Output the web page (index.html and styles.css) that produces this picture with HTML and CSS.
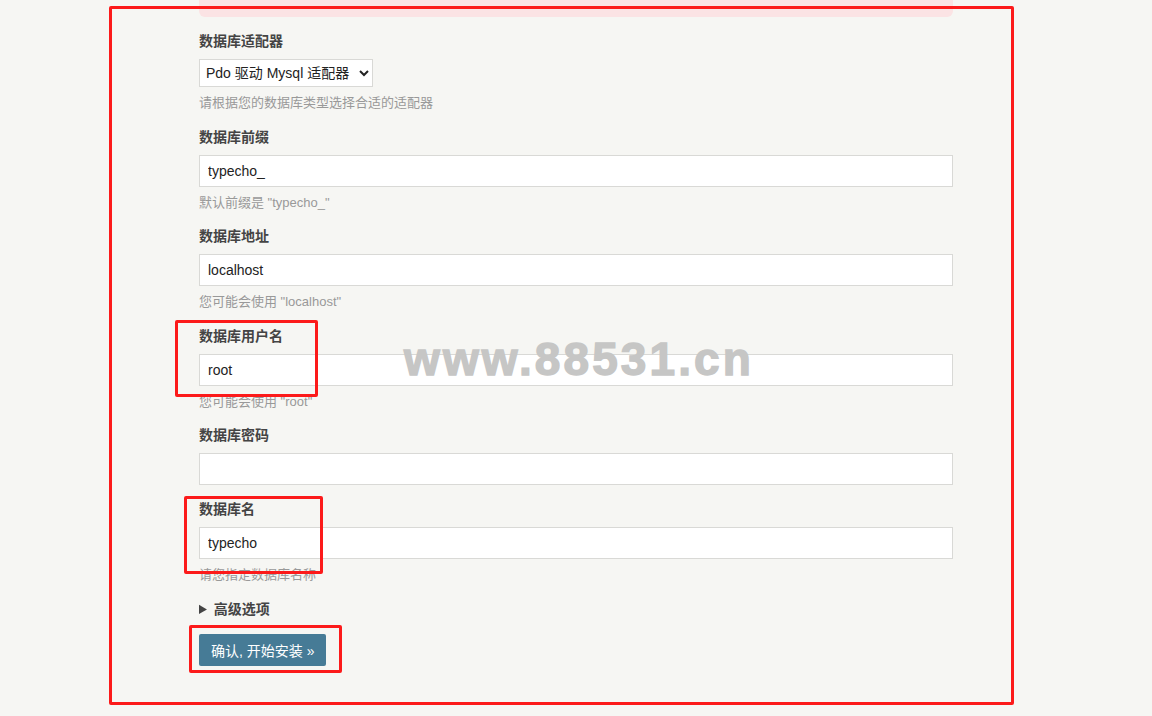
FILE: index.html
```html
<!DOCTYPE html>
<html lang="zh-CN">
<head>
<meta charset="utf-8">
<title>Typecho 安装</title>
<link rel="stylesheet" href="styles.css">
</head>
<body>
<div class="page">
  <div class="container">
    <div class="message-error"></div>
    <form class="install-form">
      <ul class="typecho-option">
        <li>
          <label class="typecho-label" for="dbAdapter">数据库适配器</label>
          <select id="dbAdapter" class="select">
            <option>Pdo 驱动 Mysql 适配器</option>
          </select>
          <p class="description">请根据您的数据库类型选择合适的适配器</p>
        </li>
      </ul>
      <ul class="typecho-option">
        <li>
          <label class="typecho-label" for="dbPrefix">数据库前缀</label>
          <input id="dbPrefix" class="text" type="text" value="typecho_">
          <p class="description">默认前缀是 "typecho_"</p>
        </li>
      </ul>
      <ul class="typecho-option">
        <li>
          <label class="typecho-label" for="dbHost">数据库地址</label>
          <input id="dbHost" class="text" type="text" value="localhost">
          <p class="description">您可能会使用 "localhost"</p>
        </li>
      </ul>
      <ul class="typecho-option">
        <li>
          <label class="typecho-label" for="dbUser">数据库用户名</label>
          <input id="dbUser" class="text" type="text" value="root">
          <p class="description">您可能会使用 "root"</p>
        </li>
      </ul>
      <ul class="typecho-option">
        <li>
          <label class="typecho-label" for="dbPassword">数据库密码</label>
          <input id="dbPassword" class="text" type="password" value="">
        </li>
      </ul>
      <ul class="typecho-option">
        <li>
          <label class="typecho-label" for="dbDatabase">数据库名</label>
          <input id="dbDatabase" class="text" type="text" value="typecho">
          <p class="description">请您指定数据库名称</p>
        </li>
      </ul>
      <details class="advanced">
        <summary>高级选项</summary>
      </details>
      <ul class="typecho-option submit-row">
        <li>
          <button type="button" class="btn primary">确认, 开始安装 »</button>
        </li>
      </ul>
    </form>
  </div>

  <div class="watermark">www.88531.cn</div>
  <div class="mark mark-page"></div>
  <div class="mark mark-user"></div>
  <div class="mark mark-dbname"></div>
  <div class="mark mark-submit"></div>
</div>
</body>
</html>
```

FILE: styles.css
```css
html, body {
  margin: 0;
  padding: 0;
  height: 100%;
  overflow: hidden;
}

body {
  background: #F6F6F3;
  color: #444;
  font-family: "Liberation Sans", Arial, "Noto Sans CJK SC", sans-serif;
  font-size: 14px;
  line-height: 1.5;
}

.page {
  position: relative;
  min-height: 716px;
}

.container {
  width: 754px;
  margin: 0 auto;
}

.message-error {
  height: 17px;
  background: #FBE3E4;
  border-radius: 0 0 6px 6px;
}

.install-form {
  margin: 0;
}

.typecho-option {
  list-style: none;
  margin: 14px 0;
  padding: 0;
}

.typecho-label {
  display: block;
  margin-bottom: 7px;
  font-weight: bold;
}

.text {
  display: block;
  box-sizing: border-box;
  width: 100%;
  height: 32px;
  margin: 0;
  padding: 0 8px;
  border: 1px solid #D9D9D6;
  border-radius: 0;
  background: #fff;
  color: #222;
  font-family: inherit;
  font-size: 14px;
  outline: none;
}

.select {
  display: block;
  box-sizing: border-box;
  width: 174px;
  height: 28px;
  margin: 0;
  padding: 0 2px;
  border: 1px solid #D9D9D6;
  border-radius: 0;
  background: #fff;
  color: #222;
  font-family: inherit;
  font-size: 14px;
}

.description {
  margin: 6px 0 0;
  color: #999;
  font-size: 13px;
  line-height: 19.5px;
}

.advanced {
  margin: 14px 0;
}

.advanced summary {
  font-weight: bold;
  cursor: pointer;
}

.submit-row {
  margin-top: 14px;
}

.btn {
  height: 32px;
  padding: 0 12px;
  border: 0;
  border-radius: 2px;
  font-family: inherit;
  font-size: 14px;
  cursor: pointer;
}

.btn.primary {
  background: #467B96;
  color: #fff;
}

.watermark {
  position: absolute;
  left: 404px;
  top: 336px;
  font-size: 46px;
  line-height: 46px;
  font-weight: bold;
  letter-spacing: 3.1px;
  color: #c6c6c5;
  -webkit-text-stroke: 1.4px #c6c6c5;
  white-space: nowrap;
  pointer-events: none;
}

.mark {
  position: absolute;
  box-sizing: border-box;
  border: 3px solid #FC1A1A;
  border-radius: 2px;
  pointer-events: none;
}

.mark-page {
  left: 109px;
  top: 6px;
  width: 905px;
  height: 699px;
}

.mark-user {
  left: 175px;
  top: 320px;
  width: 143px;
  height: 77px;
}

.mark-dbname {
  left: 184px;
  top: 496px;
  width: 139px;
  height: 78px;
}

.mark-submit {
  left: 189px;
  top: 625px;
  width: 153px;
  height: 48px;
}
```
